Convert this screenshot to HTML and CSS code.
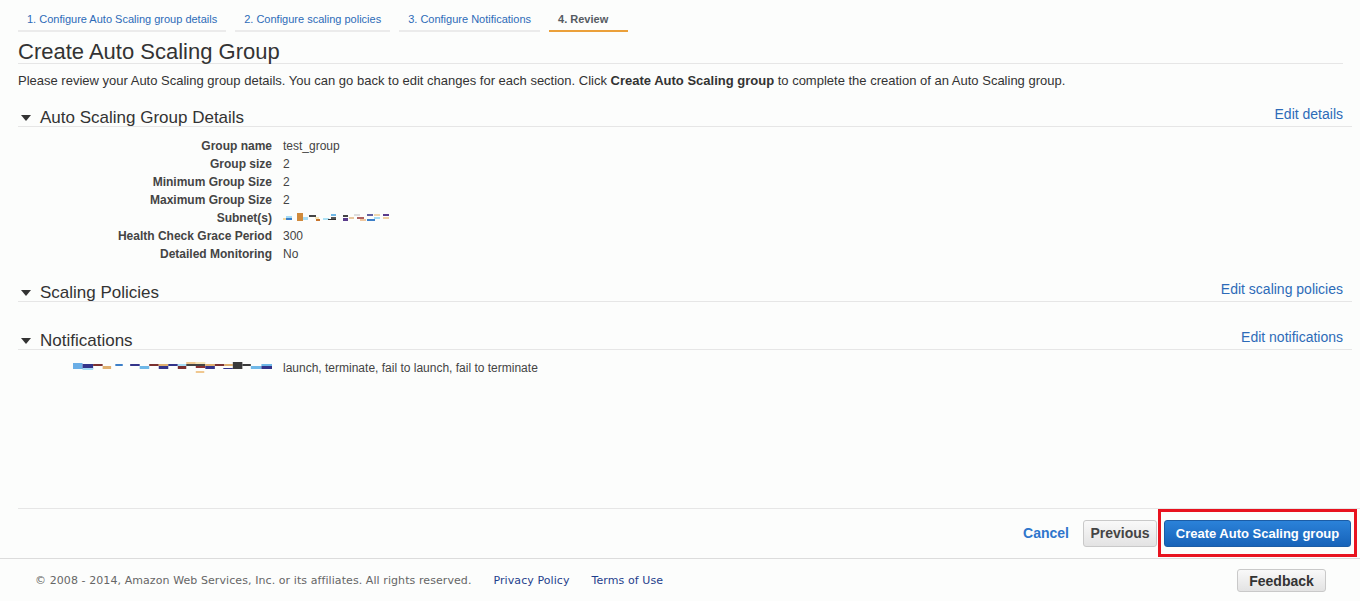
FILE: index.html
```html
<!DOCTYPE html>
<html>
<head>
<meta charset="utf-8">
<link rel="stylesheet" href="styles.css">
</head>
<body>
<div class="page">
  <nav class="tabs">
    <a class="tab">1. Configure Auto Scaling group details</a>
    <a class="tab">2. Configure scaling policies</a>
    <a class="tab">3. Configure Notifications</a>
    <a class="tab active">4. Review</a>
  </nav>

  <main class="content">
    <h1 class="title">Create Auto Scaling Group</h1>
    <p class="intro">Please review your Auto Scaling group details. You can go back to edit changes for each section. Click <b>Create Auto Scaling group</b> to complete the creation of an Auto Scaling group.</p>

    <section class="section first">
      <div class="section-head">
        <span class="caret"></span>
        <h2 class="section-title">Auto Scaling Group Details</h2>
        <a class="edit-link">Edit details</a>
      </div>
      <dl class="details">
        <dt>Group name</dt><dd>test_group</dd>
        <dt>Group size</dt><dd>2</dd>
        <dt>Minimum Group Size</dt><dd>2</dd>
        <dt>Maximum Group Size</dt><dd>2</dd>
        <dt>Subnet(s)</dt>
        <dd>
          <svg class="redact" width="110" height="10" viewBox="0 0 110 10">
            <rect x="0" y="5" width="6" height="2" fill="#f3d9a0"/>
            <rect x="3" y="3" width="6" height="2" fill="#a6dcf5"/>
            <rect x="3" y="5" width="6" height="2" fill="#3c7fc8"/>
            <rect x="14" y="0" width="6" height="8" fill="#d08a3c"/>
            <rect x="20" y="4" width="5" height="3" fill="#a6dcf5"/>
            <rect x="26" y="2" width="7" height="2" fill="#444"/>
            <rect x="32" y="4" width="4" height="2" fill="#f5e6b8"/>
            <rect x="33" y="6" width="4" height="2" fill="#c8752e"/>
            <rect x="40" y="5" width="6" height="2" fill="#aee2f5"/>
            <rect x="45" y="6" width="8" height="1" fill="#333"/>
            <rect x="48" y="1" width="5" height="2" fill="#6fb8e8"/>
            <rect x="48" y="4" width="5" height="2" fill="#555"/>
            <rect x="60" y="2" width="5" height="2" fill="#444"/>
            <rect x="60" y="5" width="5" height="3" fill="#5a3c8c"/>
            <rect x="66" y="4" width="5" height="2" fill="#e8c8a0"/>
            <rect x="71" y="1" width="6" height="2" fill="#ddd"/>
            <rect x="74" y="4" width="7" height="2" fill="#b06060"/>
            <rect x="77" y="6" width="6" height="2" fill="#f0c8a0"/>
            <rect x="84" y="1" width="6" height="2" fill="#6060a0"/>
            <rect x="84" y="6" width="8" height="2" fill="#3c7fc8"/>
            <rect x="91" y="1" width="6" height="2" fill="#f0d8b0"/>
            <rect x="91" y="4" width="6" height="2" fill="#a6dcf5"/>
            <rect x="100" y="1" width="6" height="2" fill="#5a3c8c"/>
            <rect x="100" y="4" width="6" height="2" fill="#f0d0a0"/>
          </svg>
        </dd>
        <dt>Health Check Grace Period</dt><dd>300</dd>
        <dt>Detailed Monitoring</dt><dd>No</dd>
      </dl>
    </section>

    <section class="section">
      <div class="section-head">
        <span class="caret"></span>
        <h2 class="section-title">Scaling Policies</h2>
        <a class="edit-link">Edit scaling policies</a>
      </div>
    </section>

    <section class="section notif">
      <div class="section-head">
        <span class="caret"></span>
        <h2 class="section-title">Notifications</h2>
        <a class="edit-link">Edit notifications</a>
      </div>
      <dl class="details">
        <dt>
          <svg class="redact" width="199" height="14" viewBox="0 0 188 14" preserveAspectRatio="none">
            <rect x="0" y="2" width="9" height="6" fill="#6aaee6"/>
            <rect x="9" y="3" width="10" height="5" fill="#33348a"/>
            <rect x="19" y="3" width="9" height="2" fill="#7a3030"/>
            <rect x="9" y="7" width="10" height="2" fill="#a6dcf5"/>
            <rect x="28" y="5" width="8" height="3" fill="#e0b070"/>
            <rect x="40" y="3" width="7" height="2" fill="#3c7fc8"/>
            <rect x="54" y="3" width="9" height="2" fill="#33348a"/>
            <rect x="63" y="5" width="9" height="3" fill="#6fb8e8"/>
            <rect x="72" y="3" width="9" height="2" fill="#7a3030"/>
            <rect x="81" y="3" width="9" height="2" fill="#e0b070"/>
            <rect x="81" y="5" width="9" height="3" fill="#33348a"/>
            <rect x="90" y="3" width="9" height="2" fill="#33348a"/>
            <rect x="99" y="3" width="8" height="2" fill="#a6dcf5"/>
            <rect x="99" y="5" width="8" height="3" fill="#7a3030"/>
            <rect x="107" y="1" width="9" height="2" fill="#f0c890"/>
            <rect x="116" y="1" width="9" height="3" fill="#f5e6b8"/>
            <rect x="107" y="3" width="18" height="2" fill="#444"/>
            <rect x="116" y="5" width="9" height="2" fill="#8a3030"/>
            <rect x="116" y="10" width="8" height="2" fill="#f0c890"/>
            <rect x="125" y="3" width="9" height="2" fill="#e0b070"/>
            <rect x="125" y="5" width="9" height="3" fill="#33348a"/>
            <rect x="134" y="3" width="9" height="2" fill="#7a3030"/>
            <rect x="143" y="3" width="8" height="2" fill="#e0b070"/>
            <rect x="142" y="7" width="9" height="1" fill="#33348a"/>
            <rect x="151" y="1" width="9" height="7" fill="#3a3a3a"/>
            <rect x="160" y="3" width="8" height="2" fill="#3a3a3a"/>
            <rect x="168" y="5" width="10" height="3" fill="#6fb8e8"/>
            <rect x="178" y="3" width="10" height="2" fill="#6fb8e8"/>
            <rect x="178" y="5" width="10" height="3" fill="#33348a"/>
          </svg>
        </dt>
        <dd>launch, terminate, fail to launch, fail to terminate</dd>
      </dl>
    </section>
  </main>

  <div class="actions">
    <a class="cancel">Cancel</a>
    <button class="btn btn-secondary">Previous</button>
    <span class="highlight">
      <button class="btn btn-primary">Create Auto Scaling group</button>
    </span>
  </div>

  <footer class="footer">
    <span class="copyright">© 2008 - 2014, Amazon Web Services, Inc. or its affiliates. All rights reserved.</span>
    <a class="footer-link">Privacy Policy</a>
    <a class="footer-link">Terms of Use</a>
    <button class="btn feedback">Feedback</button>
  </footer>
</div>
</body>
</html>
```

FILE: styles.css
```css
* { box-sizing: border-box; }

html, body {
  margin: 0;
  padding: 0;
  height: 100%;
  background: #fcfdfc;
  font-family: "Liberation Sans", Arial, sans-serif;
  color: #333;
}

.page {
  display: flex;
  flex-direction: column;
  height: 601px;
}

.tabs {
  display: flex;
  gap: 9px;
  margin-left: 18px;
  padding-top: 13px;
}

.tab {
  font-size: 11px;
  line-height: 13px;
  color: #2d6bb8;
  padding: 0 9px 4px;
  border-bottom: 2px solid #ebebeb;
  white-space: nowrap;
}

.tab.active {
  color: #555b62;
  font-weight: bold;
  border-bottom-color: #eba03a;
  padding-right: 20px;
}

.content {
  flex: 1;
  padding: 0 8px 0 18px;
}

.title {
  margin: 6px 9px 0 0;
  padding-top: 2px;
  font-size: 22px;
  font-weight: normal;
  line-height: 23px;
  color: #333;
  border-bottom: 1px solid #e6e6e6;
}

.intro {
  margin: 9px 0 0;
  font-size: 13px;
  line-height: 16px;
  color: #333;
}

.section { margin-top: 18px; }
.section + .section { margin-top: 19px; }
.section.notif { margin-top: 28px; }

.section-head {
  display: flex;
  align-items: flex-start;
  padding-left: 3px;
  border-bottom: 1px solid #e6e6e6;
  height: 20px;
}

.caret {
  width: 0;
  height: 0;
  border-left: 5px solid transparent;
  border-right: 5px solid transparent;
  border-top: 6px solid #333;
  margin: 8px 9px 0 0;
}

.section-title {
  margin: 1px 0 0;
  flex: 1;
  font-size: 17px;
  font-weight: normal;
  line-height: 20px;
  color: #333;
}

.edit-link {
  font-size: 14px;
  line-height: 16px;
  color: #2d6bb8;
  margin: -1px 9px 0 0;
}

.details {
  display: grid;
  grid-template-columns: 254px 1fr;
  column-gap: 11px;
  margin: 10px 0 0;
  font-size: 12px;
  line-height: 18px;
  color: #444;
}

.details dt {
  font-weight: bold;
  text-align: right;
  display: flex;
  justify-content: flex-end;
  align-items: center;
}

.details dd {
  margin: 0;
  display: flex;
  align-items: center;
}

.notif .details { margin-top: 9px; }

.redact { display: block; }

.actions {
  display: flex;
  align-items: center;
  justify-content: flex-end;
  margin-left: 18px;
  padding: 0 3px 1px 0;
  border-top: 1px solid #e6e6e6;
}

.cancel {
  font-size: 14px;
  font-weight: bold;
  color: #2e76cc;
  margin-right: 14px;
}

.btn {
  font-family: "Liberation Sans", Arial, sans-serif;
  font-weight: bold;
  border-radius: 3px;
  cursor: pointer;
}

.btn-secondary {
  height: 27px;
  width: 74px;
  padding: 0;
  font-size: 14px;
  color: #444;
  background: linear-gradient(#f9f9f9, #e3e3e3);
  border: 1px solid #c9c9c9;
  margin-right: 1px;
}

.highlight {
  display: flex;
  border: 3px solid #e8131f;
  padding: 8px 3px 7px;
}

.btn-primary {
  height: 27px;
  width: 187px;
  padding: 0;
  font-size: 13px;
  color: #fff;
  background: linear-gradient(#2b82d9, #1763b9);
  border: 1px solid #1b5ca5;
}

.footer {
  display: flex;
  align-items: center;
  height: 43px;
  border-top: 1px solid #dcdcdc;
  padding: 1px 34px 0 35px;
  font-family: "DejaVu Sans", Verdana, sans-serif;
  font-size: 11px;
  letter-spacing: 0.08px;
}

.copyright { color: #666; margin-right: 22px; }

.footer-link {
  color: #1f3f8c;
  margin-right: 22px;
}

.feedback {
  margin-left: auto;
  height: 23px;
  width: 89px;
  padding: 0;
  font-size: 14px;
  color: #333;
  background: linear-gradient(#f9f9f9, #e3e3e3);
  border: 1px solid #c9c9c9;
  font-family: "Liberation Sans", Arial, sans-serif;
  letter-spacing: 0;
}
```
